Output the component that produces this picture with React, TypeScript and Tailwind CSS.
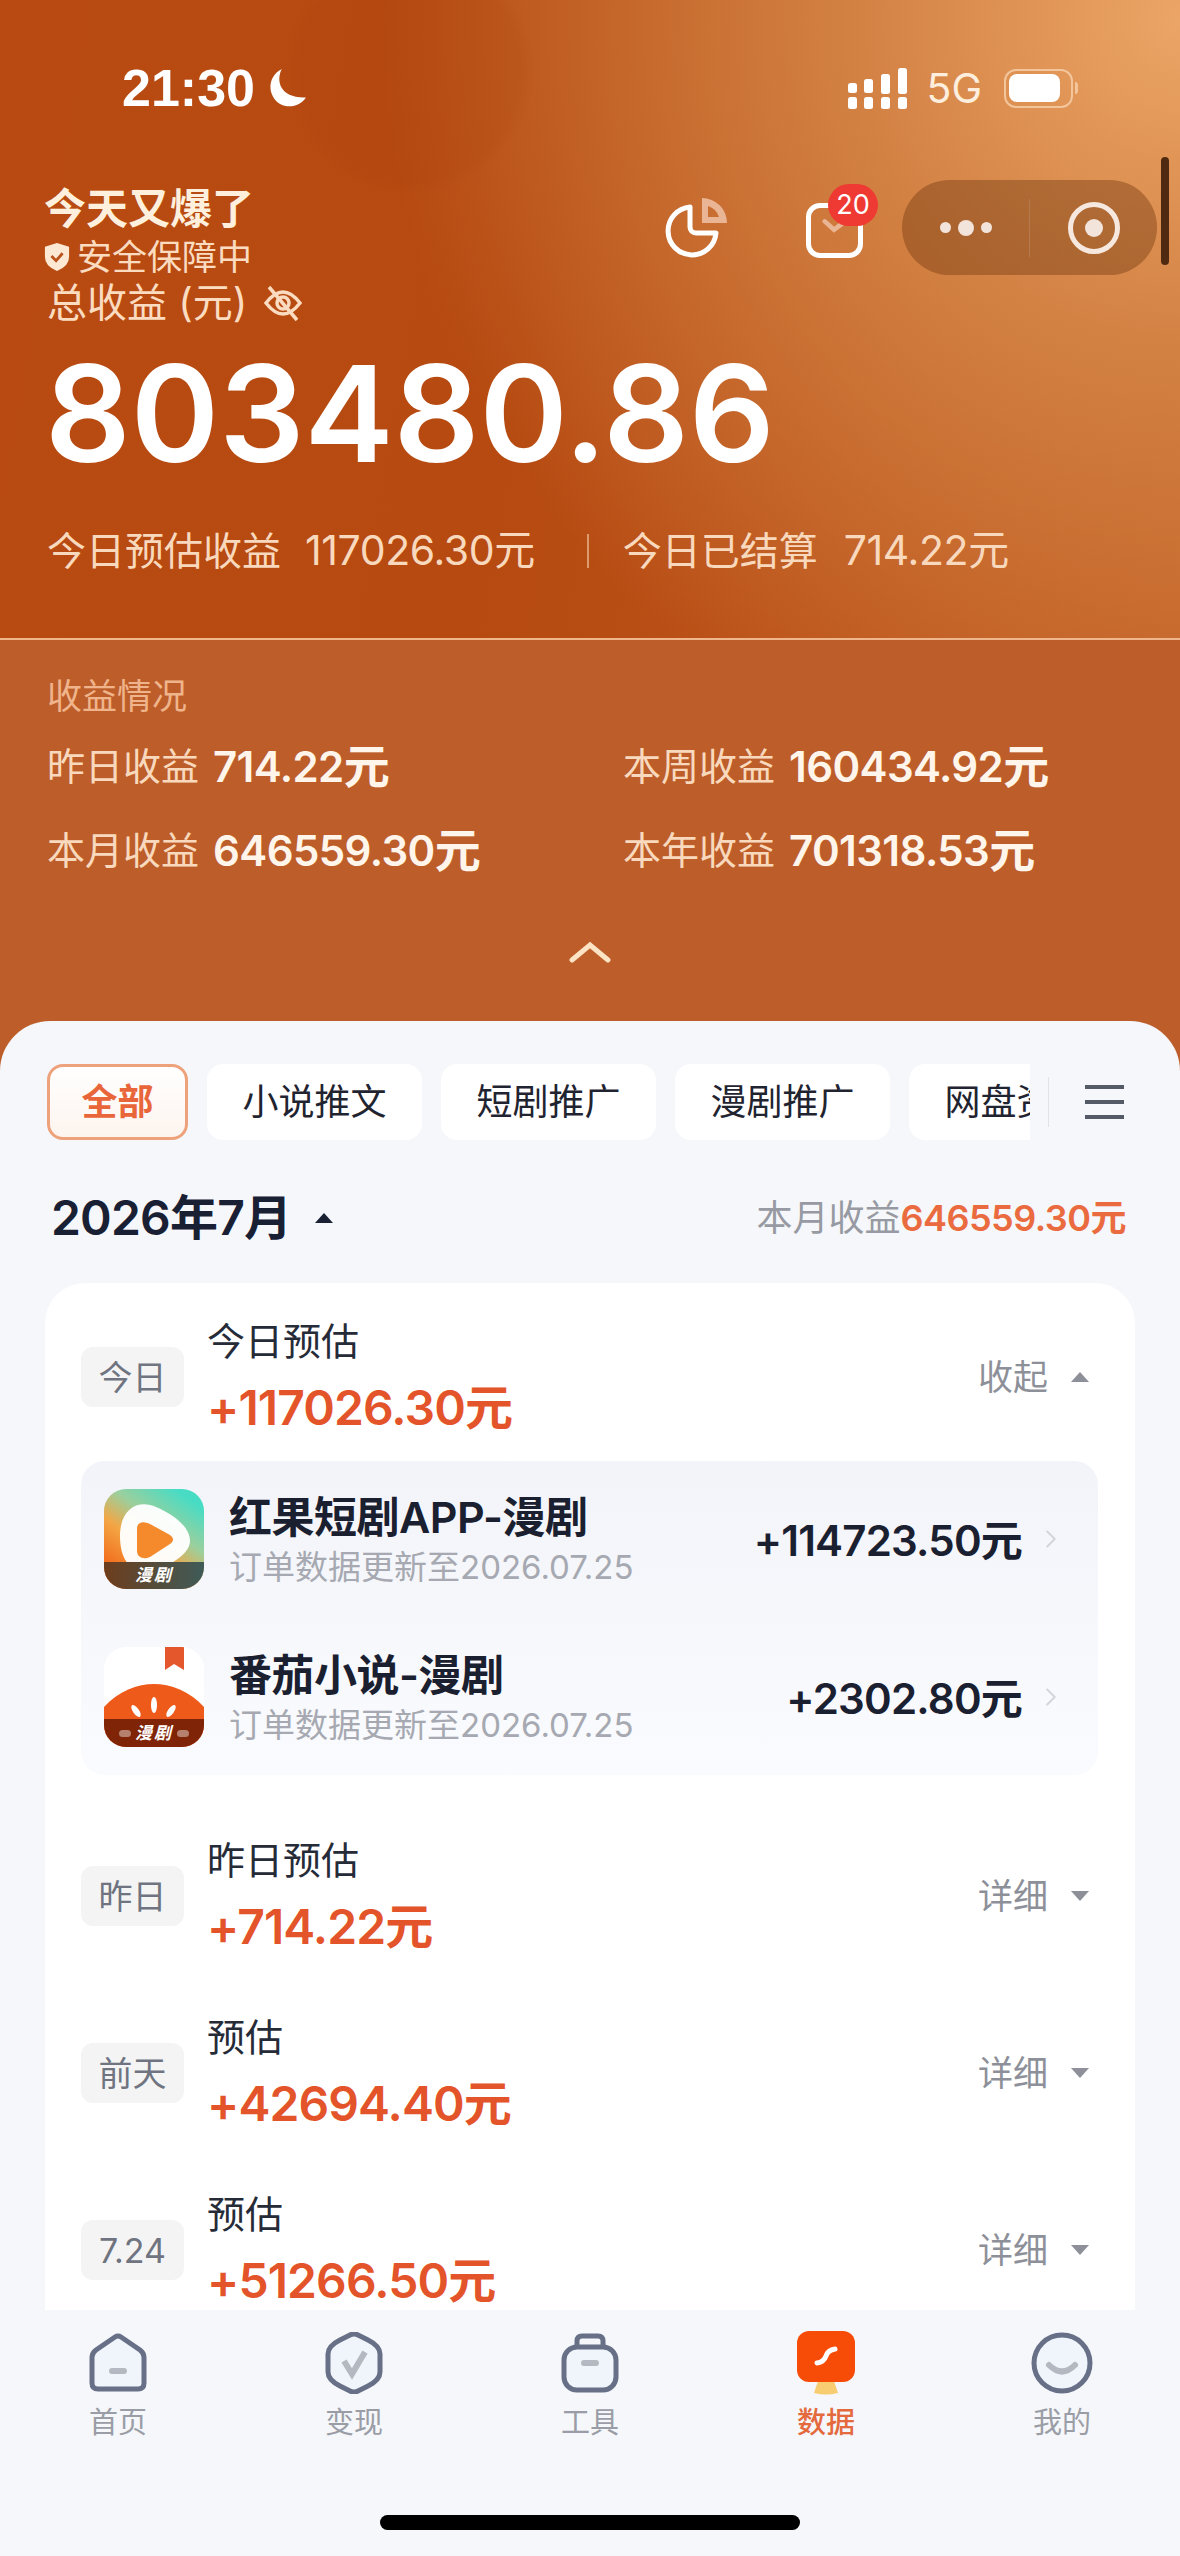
import { ChevronRight } from "lucide-react";

const TABS = ["小说推文", "短剧推广", "漫剧推广", "网盘资源"];

const DAYS = [
  { badge: "昨日", title: "昨日预估", amount: "+714.22元" },
  { badge: "前天", title: "预估", amount: "+42694.40元" },
  { badge: "7.24", title: "预估", amount: "+51266.50元" },
];

function Triangle({ className }: { className: string }) {
  return (
    <svg viewBox="0 0 20 12" className={className} fill="currentColor">
      <path d="M10 1 L19 11 H1 Z" strokeLinejoin="round" />
    </svg>
  );
}

function StatusBar() {
  return (
    <div className="flex h-[56px] items-center justify-between pr-[102px] pl-[122px]">
      <div className="flex items-center gap-[11px]">
        <span className="font-['Liberation_Sans',sans-serif] text-[52px] leading-[56px] font-bold text-white">21:30</span>
        <svg viewBox="0 0 40 40" className="h-[42px] w-[42px]" fill="#fff">
          <path d="M15 2 C9 14 14 30 38 29 C33 37 22 40 13 35 C2 28 0 10 15 2 Z" />
        </svg>
      </div>
      <div className="flex items-center">
        <svg viewBox="0 0 59 41" className="h-[41px] w-[59px]" fill="#fff">
          <rect x="0" y="15" width="9" height="10" rx="2.5" />
          <rect x="0" y="29" width="9" height="12" rx="2.5" />
          <rect x="16" y="11" width="9" height="14" rx="2.5" />
          <rect x="16" y="29" width="9" height="12" rx="2.5" />
          <rect x="33" y="6" width="9" height="20" rx="2.5" />
          <rect x="33" y="29" width="9" height="12" rx="2.5" />
          <rect x="50" y="0" width="9" height="26" rx="2.5" />
          <rect x="50" y="29" width="9" height="12" rx="2.5" />
        </svg>
        <span className="ml-[19px] text-[41px] leading-[44px] text-[#fdeedd]">5G</span>
        <div className="ml-[22px] flex h-[39px] w-[69px] items-center rounded-[12px] border-2 border-[#f3c59c] p-[3px]">
          <div className="h-[28px] w-[51px] rounded-[8px] bg-white" />
        </div>
        <div className="ml-[2px] h-[12px] w-[3px] rounded-r-full bg-[#f3c59c]" />
      </div>
    </div>
  );
}

function HeaderIcons() {
  return (
    <div className="flex items-start gap-[79px] pt-[13px] pr-[317px]">
      <svg viewBox="0 0 62 60" className="h-[60px] w-[62px]" fill="none">
        <path
          d="M25 9 A24 24 0 1 0 51 35 H31 A6 6 0 0 1 25 29 Z"
          stroke="#fff"
          strokeWidth="5"
          strokeLinejoin="round"
        />
        <path d="M37 0 A25 25 0 0 1 62 25 H37 Z M43 8 V19 H54 A17 17 0 0 0 43 8 Z" fill="#eab594" fillRule="evenodd" />
      </svg>
      <div className="relative mt-[5px] h-[55px] w-[57px] rounded-[14px] border-[5px] border-white">
        <svg viewBox="0 0 28 16" className="absolute top-[10px] left-[11px] h-[16px] w-[26px]" fill="none">
          <path d="M3 3 L13 12 L25 3" stroke="#eab594" strokeWidth="5" strokeLinecap="round" />
        </svg>
        <span className="absolute -top-[24px] left-[17px] flex h-[42px] w-[50px] items-center justify-center rounded-full bg-[#ee3a32] text-[27px] text-white">
          20
        </span>
      </div>
    </div>
  );
}

function WeChatCapsule() {
  return (
    <div className="absolute top-[180px] left-[902px] flex h-[95px] w-[255px] items-center rounded-full bg-[#7a3d14]/45">
      <div className="flex flex-1 items-center justify-center gap-[7px]">
        <span className="h-[11px] w-[11px] rounded-full bg-[#f2e4da]" />
        <span className="h-[16px] w-[16px] rounded-full bg-[#f2e4da]" />
        <span className="h-[11px] w-[11px] rounded-full bg-[#f2e4da]" />
      </div>
      <div className="h-[58px] w-px bg-[#b77a4e]" />
      <div className="flex w-[127px] items-center justify-center">
        <div className="flex h-[52px] w-[52px] items-center justify-center rounded-full border-[5px] border-[#f6e8de]">
          <div className="h-[18px] w-[18px] rounded-full bg-[#f2e4da]" />
        </div>
      </div>
    </div>
  );
}

function Stat({ label, value }: { label: string; value: string }) {
  return (
    <div className="flex h-[50px] items-center">
      <span className="text-[38px] text-[#f9d9bd]">{label}</span>
      <span className="ml-[14px] text-[42px] font-semibold tracking-[-0.6px] text-[#fff5ea]">{value}</span>
      <span className="text-[46px] font-semibold text-[#fff5ea]">元</span>
    </div>
  );
}

function RedFruitIcon() {
  return (
    <div className="relative h-[100px] w-[100px] overflow-hidden rounded-[22px] bg-[linear-gradient(215deg,#48dcc4_12%,#9ccf9c_38%,#f3a645_58%,#f26a1c_85%)]">
      <svg viewBox="0 0 100 100" className="absolute inset-0 h-full w-full">
        <path
          d="M16 47 C16 20 34 10 52 18 C66 24 86 36 86 52 C86 66 62 80 42 82 C26 83 16 70 16 47 Z"
          fill="#fff"
          fillOpacity="0.96"
        />
        <path d="M33 40 C33 32 40 32 46 35 L66 46 C70 49 70 52 66 55 L46 68 C39 71 33 68 33 62 Z" fill="#f58a2c" />
      </svg>
      <div className="absolute inset-x-0 bottom-0 flex h-[27px] items-center justify-center bg-[linear-gradient(90deg,#6d3d1c,#3f5b58)]">
        <span className="text-[17px] leading-none font-bold tracking-[2px] text-white italic">漫剧</span>
      </div>
    </div>
  );
}

function TomatoIcon() {
  return (
    <div className="relative h-[100px] w-[100px] overflow-hidden rounded-[22px] bg-white">
      <svg viewBox="0 0 100 100" className="absolute inset-0 h-full w-full">
        <path d="M61 0 H80 V23 L70 17 L61 23 Z" fill="#e4562b" />
        <path d="M0 60 C14 44 34 37 50 37 C66 37 86 44 100 60 V100 H0 Z" fill="#ee5a1a" />
        <ellipse cx="50" cy="58" rx="3" ry="8" fill="#fff" />
        <ellipse cx="32" cy="64" rx="3" ry="7" fill="#fff" transform="rotate(-35 32 64)" />
        <ellipse cx="67" cy="64" rx="3" ry="7" fill="#fff" transform="rotate(35 67 64)" />
      </svg>
      <div className="absolute inset-x-0 bottom-0 flex h-[28px] items-center justify-center gap-[4px] bg-[#7f2407]">
        <span className="h-[7px] w-[12px] rounded-full bg-[#b5806e]" />
        <span className="text-[17px] leading-none font-bold tracking-[2px] text-white italic">漫剧</span>
        <span className="h-[7px] w-[12px] rounded-full bg-[#b5806e]" />
      </div>
    </div>
  );
}

function AppRow({ icon, name, amount }: { icon: React.ReactNode; name: string; amount: string }) {
  return (
    <div className="flex h-[100px] items-center">
      {icon}
      <div className="ml-[25px] flex-1">
        <div className="text-[43px] leading-[56px] font-semibold tracking-[-0.5px] text-[#1a2030]">{name}</div>
        <div className="text-[33px] leading-[44px] text-[#a6a9b1]">订单数据更新至2026.07.25</div>
      </div>
      <span className="mt-[2px] text-[42px] font-semibold tracking-[-0.8px] text-[#1a2030]">{amount}</span>
      <ChevronRight className="mr-[-2px] ml-[14px] h-[30px] w-[30px] text-[#d3d5da]" strokeWidth={1.6} />
    </div>
  );
}

function DayRow({
  badge,
  title,
  amount,
  action,
  open,
}: {
  badge: string;
  title: string;
  amount: string;
  action: string;
  open?: boolean;
}) {
  return (
    <div className="flex h-[122px] items-center px-[36px]">
      <span className="flex h-[60px] w-[103px] items-center justify-center rounded-[12px] bg-[#f4f4f5] text-[34px] text-[#6f7480]">
        {badge}
      </span>
      <div className="ml-[23px] flex-1">
        <div className="text-[38px] leading-[50px] text-[#262b38]">{title}</div>
        <div className="mt-[12px] text-[48px] leading-[60px] font-semibold tracking-[-0.9px] text-[#e4542a]">{amount}</div>
      </div>
      <span className="text-[35px] text-[#8d9099]">{action}</span>
      <Triangle className={`mr-[8px] ml-[21px] h-[12px] w-[22px] text-[#8d9099] ${open ? "" : "rotate-180"}`} />
    </div>
  );
}

function NavItem({ label, active, children }: { label: string; active?: boolean; children: React.ReactNode }) {
  return (
    <div className="flex flex-col items-center">
      <div className="flex h-[62px] w-[64px] items-center justify-center">{children}</div>
      <span className={`mt-[11px] text-[29px] leading-[36px] ${active ? "font-medium text-[#e46a3e]" : "text-[#9a9da6]"}`}>
        {label}
      </span>
    </div>
  );
}

function BottomNav() {
  return (
    <div className="flex flex-col items-center pt-[22px]">
      <div className="grid w-full grid-cols-5">
        <NavItem label="首页">
          <svg viewBox="0 0 60 60" className="h-[60px] w-[60px]" fill="none">
            <path
              d="M4 24 Q4 20 8 17 L27 4 Q30 2 33 4 L52 17 Q56 20 56 24 V50 Q56 56 50 56 H10 Q4 56 4 50 Z"
              fill="#f0f4fb"
              stroke="#687088"
              strokeWidth="5"
            />
            <rect x="21" y="35" width="18" height="6" rx="3" fill="#b4b8c0" />
          </svg>
        </NavItem>
        <NavItem label="变现">
          <svg viewBox="0 0 60 62" className="h-[62px] w-[60px]" fill="none">
            <path
              d="M16 8 L26 3 Q30 1 34 3 L44 8 Q56 14 56 22 V40 Q56 48 44 54 L34 59 Q30 61 26 59 L16 54 Q4 48 4 40 V22 Q4 14 16 8 Z"
              fill="#f0f4fb"
              stroke="#687088"
              strokeWidth="5"
            />
            <path d="M20 29 L28 42 L41 20" stroke="#b4b8c0" strokeWidth="6" />
          </svg>
        </NavItem>
        <NavItem label="工具">
          <svg viewBox="0 0 60 60" className="h-[60px] w-[60px]" fill="none">
            <path d="M17 15 V8 Q17 3 22 3 H38 Q43 3 43 8 V15" stroke="#687088" strokeWidth="5" />
            <rect x="4" y="14" width="52" height="43" rx="13" fill="#f0f4fb" stroke="#687088" strokeWidth="5" />
            <rect x="21" y="27" width="18" height="6" rx="3" fill="#b4b8c0" />
          </svg>
        </NavItem>
        <NavItem label="数据" active>
          <svg viewBox="0 0 60 64" className="h-[64px] w-[60px]" fill="none">
            <path d="M22 50 H38 L42 62 Q30 65 18 62 Z" fill="#f8cd72" />
            <rect x="1" y="0" width="58" height="51" rx="12" fill="#f74c08" />
            <path d="M21 32 Q28 31 30 25 Q32 19 39 18" stroke="#fff" strokeWidth="5" strokeLinecap="round" />
          </svg>
        </NavItem>
        <NavItem label="我的">
          <svg viewBox="0 0 62 62" className="h-[62px] w-[62px]" fill="none">
            <circle cx="31" cy="31" r="28" fill="#f0f4fb" stroke="#687088" strokeWidth="5" />
            <path d="M18 33 Q31 46 44 33" stroke="#b4b8c0" strokeWidth="6" strokeLinecap="round" />
          </svg>
        </NavItem>
      </div>
      <div className="mt-[74px] h-[15px] w-[420px] rounded-full bg-black" />
    </div>
  );
}

export default function App() {
  return (
    <div className="relative h-[2556px] w-[1180px] overflow-hidden bg-[#bd5e2a] font-['Inter','Noto_Sans_CJK_SC',sans-serif]">
      {/* top earnings header */}
      <div className="h-[640px] border-b-2 border-[#f0b68c] bg-[radial-gradient(circle_at_410px_70px,rgba(160,58,8,0.13)_0px,rgba(160,58,8,0.13)_110px,rgba(160,58,8,0)_125px),radial-gradient(circle_at_100%_3%,#eba566_0%,#d38244_24%,rgba(196,96,40,0)_60%),linear-gradient(100deg,#b94b12_0%,#b64a11_45%,#c15c22_100%)] pt-[60px]">
        <StatusBar />
        <div className="mt-[69px] flex justify-between pl-[44px]">
          <div>
            <div className="text-[42px] leading-[48px] font-bold text-[#fff0de]">今天又爆了</div>
            <div className="mt-[2px] flex h-[44px] items-center">
              <svg viewBox="0 0 28 32" className="h-[30px] w-[26px]">
                <path d="M14 1 L27 5 V16 Q27 26 14 31 Q1 26 1 16 V5 Z" fill="#fde8d4" />
                <path d="M8 15 L13 20 L20 12" stroke="#b8521a" strokeWidth="3" fill="none" />
              </svg>
              <span className="ml-[7px] text-[35px] text-[#fbdcc0]">安全保障中</span>
            </div>
            <div className="flex h-[48px] items-center pl-[3px]">
              <span className="text-[40px] text-[#fbdcc0]">总收益 (元)</span>
              <svg viewBox="0 0 40 40" className="ml-[16px] h-[40px] w-[40px]" fill="none" stroke="#fbdcc0" strokeWidth="3.5">
                <path d="M3 20 Q20 -2 37 20 Q20 42 3 20 Z" />
                <circle cx="20" cy="20" r="6" />
                <path d="M6 4 L34 37" />
              </svg>
            </div>
          </div>
          <HeaderIcons />
        </div>
        <div className="mt-[16px] pl-[45px] text-[134px] leading-[140px] font-semibold text-white">803480.86</div>
        <div className="mt-[45px] flex h-[46px] items-center pl-[47px] text-[39px] text-[#f9d9bd]">
          <span>今日预估收益</span>
          <span className="ml-[24px] text-[41px] tracking-[-0.4px]">117026.30元</span>
          <span className="mr-[34px] ml-[52px] h-[34px] w-[2px] bg-[#dd9a6c]" />
          <span>今日已结算</span>
          <span className="ml-[26px] text-[41px] tracking-[-0.4px]">714.22元</span>
        </div>
      </div>

      <WeChatCapsule />
      <div className="absolute top-[157px] left-[1161px] h-[108px] w-[8px] rounded-full bg-[#4f2a10]" />

      {/* earnings summary */}
      <div className="h-[381px] px-[47px] pt-[34px]">
        <div className="text-[35px] leading-[44px] text-[#f0b48c]">收益情况</div>
        <div className="mt-[23px] grid grid-cols-[576px_1fr] gap-y-[34px]">
          <Stat label="昨日收益" value="714.22" />
          <Stat label="本周收益" value="160434.92" />
          <Stat label="本月收益" value="646559.30" />
          <Stat label="本年收益" value="701318.53" />
        </div>
        <div className="mt-[66px] flex justify-center">
          <svg viewBox="0 0 42 22" className="h-[22px] w-[42px]" fill="none">
            <path d="M3 19 L21 4 L39 19" stroke="#fbe3c4" strokeWidth="5" strokeLinecap="round" />
          </svg>
        </div>
      </div>

      {/* white sheet */}
      <div className="flex h-[1535px] flex-col rounded-t-[50px] bg-[#f5f7fa]">
        <div className="h-[1289px] overflow-hidden pt-[43px]">
          <div className="flex h-[76px] items-center pl-[47px]">
            <div className="flex w-[983px] gap-[19px] overflow-hidden">
              <span className="flex h-[76px] w-[141px] shrink-0 items-center justify-center rounded-[16px] border-[3px] border-[#eea27c] bg-[linear-gradient(#fff,#fdf4ee)] text-[36px] font-bold text-[#e8663a]">
                全部
              </span>
              {TABS.map((tab) => (
                <span
                  key={tab}
                  className="flex h-[76px] w-[215px] shrink-0 items-center justify-center rounded-[16px] bg-white text-[36px] text-[#1f2430]"
                >
                  {tab}
                </span>
              ))}
            </div>
            <div className="ml-[18px] h-[50px] w-px bg-[#e0e3e8]" />
            <div className="ml-[36px] flex h-[34px] w-[39px] flex-col justify-between">
              <div className="h-[4px] bg-[#555b66]" />
              <div className="h-[4px] bg-[#555b66]" />
              <div className="h-[4px] bg-[#555b66]" />
            </div>
          </div>

          <div className="mt-[48px] flex h-[60px] items-center pr-[54px] pl-[51px]">
            <span className="text-[48px] font-semibold tracking-[-0.8px] text-[#192034]">2026年7月</span>
            <Triangle className="ml-[22px] h-[12px] w-[22px] text-[#192034]" />
            <span className="ml-auto text-[36px] text-[#979aa2]">本月收益</span>
            <span className="text-[36px] font-semibold tracking-[-0.5px] text-[#ea6b3f]">646559.30元</span>
          </div>

          <div className="mx-[45px] mt-[35px] h-[1100px] rounded-t-[40px] bg-white pt-[33px]">
            <DayRow badge="今日" title="今日预估" amount="+117026.30元" action="收起" open />
            <div className="mt-[23px] mr-[37px] ml-[36px] flex h-[314px] flex-col gap-[58px] rounded-[24px] bg-[linear-gradient(#f2f4f9,#fafbfe)] py-[28px] pr-[34px] pl-[23px]">
              <AppRow icon={<RedFruitIcon />} name="红果短剧APP-漫剧" amount="+114723.50元" />
              <AppRow icon={<TomatoIcon />} name="番茄小说-漫剧" amount="+2302.80元" />
            </div>
            <div className="mt-[60px] flex flex-col gap-[55px]">
              {DAYS.map((day) => (
                <DayRow key={day.badge} badge={day.badge} title={day.title} amount={day.amount} action="详细" />
              ))}
            </div>
          </div>
        </div>
        <BottomNav />
      </div>
    </div>
  );
}
